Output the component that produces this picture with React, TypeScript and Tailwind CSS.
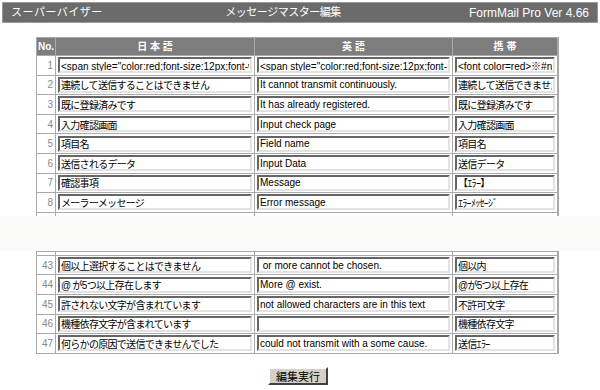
import React from 'react';

type Row = { no: number; ja: string; en: string; mb: string };

const topRows: Row[] = [
  {
    no: 1,
    ja: '<span style="color:red;font-size:12px;font-weight:bold">※#no#</span>',
    en: '<span style="color:red;font-size:12px;font-weight:bold">※#no#</span>',
    mb: '<font color=red>※#no#</font>',
  },
  { no: 2, ja: '連続して送信することはできません', en: 'It cannot transmit continuously.', mb: '連続して送信できません' },
  { no: 3, ja: '既に登録済みです', en: 'It has already registered.', mb: '既に登録済みです' },
  { no: 4, ja: '入力確認画面', en: 'Input check page', mb: '入力確認画面' },
  { no: 5, ja: '項目名', en: 'Field name', mb: '項目名' },
  { no: 6, ja: '送信されるデータ', en: 'Input Data', mb: '送信データ' },
  { no: 7, ja: '確認事項', en: 'Message', mb: '【ｴﾗｰ】' },
  { no: 8, ja: 'メーラーメッセージ', en: 'Error message', mb: 'ｴﾗｰﾒｯｾｰｼﾞ' },
];

const bottomRows: Row[] = [
  { no: 43, ja: '個以上選択することはできません', en: ' or more cannot be chosen.', mb: '個以内' },
  { no: 44, ja: '@ が5つ以上存在します', en: 'More @ exist.', mb: '@が5つ以上存在' },
  { no: 45, ja: '許されない文字が含まれています', en: 'not allowed characters are in this text', mb: '不許可文字' },
  { no: 46, ja: '機種依存文字が含まれています', en: '', mb: '機種依存文字' },
  { no: 47, ja: '何らかの原因で送信できませんでした', en: 'could not transmit with a some cause.', mb: '送信ｴﾗｰ' },
];

const font = { fontFamily: '"Liberation Sans", "Noto Sans CJK JP", sans-serif' };

// japanese text is proportional in the original, squeeze it a little
const hasKana = (s: string) => /[\u3000-\u9fff\uff00-\uffef]/.test(s);

const Field = ({ value }: { value: string }) => (
  <input
    type="text"
    defaultValue={value}
    readOnly
    className={`w-full h-[16px] px-[1px] bg-white text-[10px] leading-[12px] text-black outline-none border-2 border-t-[#666] border-l-[#666] border-b-[#e2e2e2] border-r-[#e2e2e2] ${
      hasKana(value) ? 'tracking-[-0.7px]' : 'tracking-[0px]'
    }`}
    style={font}
  />
);

const Cell = ({ children }: { children?: React.ReactNode }) => (
  <div className="bg-white h-[18.6px] flex items-center px-[2px]">{children}</div>
);

const DataRow = ({ row }: { row: Row }) => (
  <>
    <div className="bg-white h-[18.6px] flex items-center justify-end pr-[2px] text-[10px] text-[#888]">{row.no}</div>
    <Cell><Field value={row.ja} /></Cell>
    <Cell><Field value={row.en} /></Cell>
    <Cell><Field value={row.mb} /></Cell>
  </>
);

const Stub = () => (
  <>
    <div className="bg-white h-[3px]" />
    <div className="bg-white h-[3px]" />
    <div className="bg-white h-[3px]" />
    <div className="bg-white h-[3px]" />
  </>
);

const grid = 'grid grid-cols-[18px_198px_197px_104px] gap-px bg-[#a9a9a9] p-px w-[523px] ml-[36px]';

export default function App() {
  return (
    <div className="w-[600px] h-[390px] bg-white overflow-hidden pt-[2px]" style={font}>
      <div className="mx-[2px] h-[21px] bg-[#6b6b6b] border border-[#9a9a9a] flex items-center justify-between px-[8px] text-white text-[12px]">
        <span className="w-[180px] text-[11px] tracking-[0.5px]">スーパーバイザー</span>
        <span className="text-[11px] tracking-[-0.5px] mr-[34px]">メッセージマスター編集</span>
        <span className="w-[180px] text-right">FormMail Pro Ver 4.66</span>
      </div>

      <div className="mt-[14px]">
        <div className={grid}>
          <div className="bg-[#7d7d7d] h-[17px] flex items-center pl-[1px] text-white text-[10px] font-bold">No.</div>
          <div className="bg-[#7d7d7d] h-[17px] flex items-center justify-center text-white text-[10px] font-bold">日 本 語</div>
          <div className="bg-[#7d7d7d] h-[17px] flex items-center justify-center text-white text-[10px] font-bold">英 語</div>
          <div className="bg-[#7d7d7d] h-[17px] flex items-center justify-center text-white text-[10px] font-bold">携 帯</div>
          {topRows.map((r) => (
            <DataRow key={r.no} row={r} />
          ))}
          <Stub />
        </div>
      </div>

      <div className="h-[35px] bg-[#fbfcfa] -mt-px" />

      <div className={grid}>
        <Stub />
        {bottomRows.map((r) => (
          <DataRow key={r.no} row={r} />
        ))}
      </div>

      <div className="flex justify-center mt-[13px] ml-[-4px]">
        <button className="h-[18px] px-[6px] bg-[#d4d0c8] text-black text-[11px] border-2 border-t-white border-l-white border-b-[#404040] border-r-[#404040]" style={font}>
          編集実行
        </button>
      </div>
    </div>
  );
}
